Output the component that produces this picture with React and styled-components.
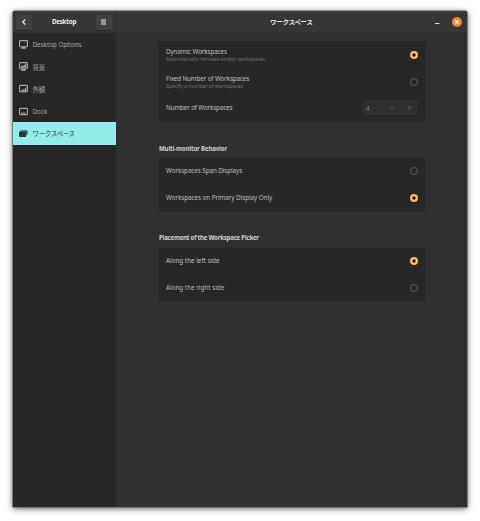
import React from "react";
import styled, { createGlobalStyle } from "styled-components";

const Global = createGlobalStyle`
  * { box-sizing: border-box; }
  html, body { margin: 0; background: #fff; }
  body {
    font-family: "Noto Sans", "Noto Sans CJK JP", sans-serif;
    font-size: 6.3px;
    line-height: 9px;
    color: #bdbdbd;
    overflow: hidden;
  }
`;

const Desktop = styled.div`
  height: 521px;
  padding: 11px 12.5px 14px;
`;

const Window = styled.main`
  width: 454.5px;
  height: 496px;
  display: grid;
  grid-template: 22px 1fr / 103.5px 1fr;
  background: #303030;
  border-radius: 2px 2px 0 0;
  overflow: hidden;
  box-shadow: 0 0 0 0.6px #555, 0 1px 5px rgba(0, 0, 0, 0.5), 0 2px 9px rgba(0, 0, 0, 0.28);
`;

const SidebarHeader = styled.header`
  display: flex;
  align-items: center;
  justify-content: space-between;
  padding: 0 3px 0 3.5px;
  background: #363636;
  border-top: 1px solid #454545;
  border-right: 1px solid #303030;
  border-bottom: 1px solid #303030;
`;

const HeaderButton = styled.button`
  width: 16px;
  height: 15px;
  padding: 0;
  display: grid;
  place-items: center;
  border: 0;
  border-radius: 1px;
  background: #414141;
  box-shadow: 0 1px 0 #292929;
  color: #d8d8d8;
`;

const Title = styled.h1`
  margin: 0;
  font-size: 6.2px;
  font-weight: 700;
  line-height: 9px;
  padding-bottom: ${(p) => p.$lift || 0}px;
  color: #eee;
  letter-spacing: ${(p) => p.$track || 0}px;
`;

const MainHeader = styled.header`
  display: grid;
  grid-template-columns: 32px 1fr 32px;
  align-items: center;
  justify-items: center;
  background: #363636;
  border-top: 1px solid #454545;
  border-bottom: 1px solid #2d2d2d;
`;

const Controls = styled.div`
  width: 32px;
  display: flex;
  align-items: center;
  justify-content: space-between;
  padding-right: 5.5px;
`;

const Sidebar = styled.nav`
  background: #272727;
`;

const NavItem = styled.div`
  height: 22.35px;
  display: flex;
  align-items: center;
  gap: 5px;
  padding-left: 6px;
  background: ${(p) => (p.$active ? "#94ebeb" : "transparent")};
  color: ${(p) => (p.$active ? "#253b3b" : "#a6a6a6")};
  letter-spacing: ${(p) => p.$track || 0}px;
  white-space: nowrap;
`;

const NavText = styled.span`
  padding-top: ${(p) => (p.$drop ? 1 : 0)}px;
`;

const Content = styled.section`
  padding: 9px 42px 0 43px;
  display: flex;
  flex-direction: column;
`;

const Card = styled.div`
  width: 266px;
  background: #272727;
  box-shadow: 0 0 0 0.5px #242424;
`;

const Row = styled.div`
  height: ${(p) => p.$height || 26.5}px;
  display: flex;
  align-items: center;
  justify-content: space-between;
  padding: 0 7px;
  & + & { border-top: 1px solid #252525; }
`;

const RowText = styled.div`
  display: flex;
  flex-direction: column;
  padding-bottom: ${(p) => p.$lift || 0}px;
`;

const Label = styled.span`
  white-space: nowrap;
  letter-spacing: ${(p) => p.$track || 0}px;
`;

const Hint = styled.span`
  font-size: 5.2px;
  line-height: 6px;
  color: #747474;
  white-space: nowrap;
  letter-spacing: ${(p) => p.$track || 0}px;
`;

const GroupTitle = styled.h2`
  height: 9px;
  margin: 22.6px 0 5.3px;
  font-size: 6.15px;
  font-weight: 700;
  line-height: 9px;
  color: #d0d0d0;
  white-space: nowrap;
  letter-spacing: ${(p) => p.$track || 0}px;
`;

const Radio = styled.span`
  width: 8px;
  height: 8px;
  border-radius: 50%;
  border: ${(p) => (p.$on ? "0" : "1px solid #5c5c5c")};
  background: ${(p) =>
    p.$on ? "radial-gradient(circle, #17130f 1.2px, #ffb868 2px)" : "transparent"};
`;

const Stepper = styled.div`
  width: 55.5px;
  height: 15.5px;
  display: grid;
  grid-template-columns: 1fr 17px 17px;
  align-items: center;
  justify-items: center;
  margin-bottom: 1px;
  border-radius: 1px;
  background: #2f2f2f;
  color: #505050;
`;

const StepValue = styled.span`
  justify-self: start;
  padding: 1px 0 0 3.6px;
  font-size: 6.3px;
  color: #858585;
`;

const Icon = ({ size = 8, children }) => (
  <svg width={size} height={size} viewBox="0 0 16 16" fill="none" stroke="currentColor" strokeWidth="2">
    {children}
  </svg>
);

const icons = {
  monitor: (
    <>
      <rect x="1" y="1" width="14" height="11" rx="1" />
      <path d="M4 14h8" strokeWidth="3" />
    </>
  ),
  background: (
    <>
      <rect x="1" y="1" width="14" height="11" rx="2" />
      <path d="M4 14h8" strokeWidth="3" />
      <path d="M3 10V8l3-2 2 1 4-4h1v7z" fill="currentColor" stroke="none" />
    </>
  ),
  appearance: (
    <>
      <rect x="1" y="2.5" width="14" height="11" rx="1" />
      <path d="M4 12l3-3 2 1 3-4h1v6z" fill="currentColor" stroke="none" />
    </>
  ),
  dock: (
    <>
      <rect x="1" y="2.5" width="14" height="11" rx="1" />
      <path d="M4 10.7h8" />
    </>
  ),
  workspaces: (
    <>
      <path d="M4 2h10a1.5 1.5 0 0 1 1.5 1.5V9a2 2 0 0 1-2 2H12V5H2.5V3.5A1.5 1.5 0 0 1 4 2z" fill="currentColor" opacity=".75" stroke="none" />
      <rect x="0" y="4.6" width="12.5" height="9.4" rx="1.5" fill="currentColor" stroke="none" />
    </>
  ),
};

const pages = [
  { icon: "monitor", name: "Desktop Options", track: -0.03 },
  { icon: "background", name: "背景", drop: true },
  { icon: "appearance", name: "外観", drop: true },
  { icon: "dock", name: "Dock" },
  { icon: "workspaces", name: "ワークスペース", track: -0.08, active: true },
];

function Option({ label, track, hint, hintTrack, on, height }) {
  return (
    <Row $height={height}>
      <RowText $lift={hint ? 1.4 : 0.4}>
        <Label $track={track}>{label}</Label>
        {hint && <Hint $track={hintTrack}>{hint}</Hint>}
      </RowText>
      <Radio $on={on} />
    </Row>
  );
}

export default function App() {
  return (
    <>
      <Global />
      <Desktop>
        <Window>
          <SidebarHeader>
            <HeaderButton aria-label="Back">
              <Icon><path d="M10.5 3L5.5 8l5 5" strokeWidth="2.8" /></Icon>
            </HeaderButton>
            <Title $track={-0.2} $lift={1}>Desktop</Title>
            <HeaderButton aria-label="Menu">
              <svg width="5" height="6" viewBox="0 0 5 6">
                <path d="M0 0h5v6H0z" fill="#8d8d8d" />
                <path d="M0 1h5M0 3h5M0 5h5" stroke="#9c9c9c" />
              </svg>
            </HeaderButton>
          </SidebarHeader>
          <MainHeader>
            <span />
            <Title $lift={0.6}>ワークスペース</Title>
            <Controls>
              <svg width="5" height="8" viewBox="0 0 5 8"><path d="M0 5.5h4.5" stroke="#e0e0e0" /></svg>
              <svg width="10" height="10" viewBox="0 0 10 10">
                <circle cx="5" cy="5" r="5" fill="#f08a24" />
                <path d="M3.3 3.3l3.4 3.4M6.7 3.3L3.3 6.7" stroke="#fff0df" strokeWidth="1.3" />
              </svg>
            </Controls>
          </MainHeader>
          <Sidebar>
            {pages.map((p) => (
              <NavItem key={p.name} $active={p.active} $track={p.track}>
                <Icon size={9}>{icons[p.icon]}</Icon>
                <NavText $drop={p.drop}>{p.name}</NavText>
              </NavItem>
            ))}
          </Sidebar>
          <Content>
            <Card>
              <Option height={26.2} label="Dynamic Workspaces" track={-0.11} hint="Automatically removes empty workspaces." hintTrack={-0.09} on />
              <Option height={26.2} label="Fixed Number of Workspaces" track={-0.13} hint="Specify a number of workspaces" hintTrack={-0.05} />
              <Row $height={26.6}>
                <RowText $lift={1.4}>
                  <Label $track={-0.15}>Number of Workspaces</Label>
                </RowText>
                <Stepper>
                  <StepValue>4</StepValue>
                  <svg width="5" height="5" viewBox="0 0 5 5"><path d="M0 2.5h5" stroke="currentColor" /></svg>
                  <svg width="5" height="5" viewBox="0 0 5 5"><path d="M0 2.5h5M2.5 0v5" stroke="currentColor" /></svg>
                </Stepper>
              </Row>
            </Card>
            <GroupTitle $track={-0.18}>Multi-monitor Behavior</GroupTitle>
            <Card>
              <Option label="Workspaces Span Displays" track={-0.08} />
              <Option label="Workspaces on Primary Display Only" track={-0.06} on />
            </Card>
            <GroupTitle $track={-0.25}>Placement of the Workspace Picker</GroupTitle>
            <Card>
              <Option label="Along the left side" on />
              <Option label="Along the right side" />
            </Card>
          </Content>
        </Window>
      </Desktop>
    </>
  );
}
